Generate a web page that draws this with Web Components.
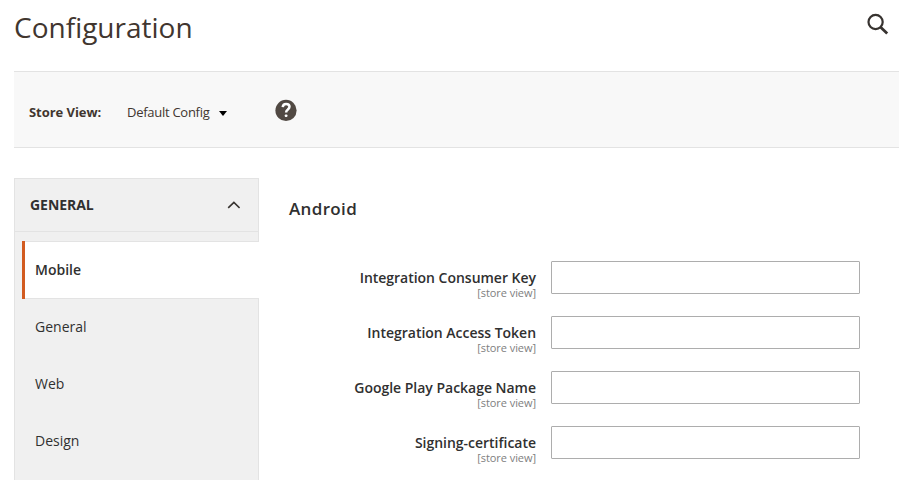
<!DOCTYPE html>
<html lang="en">
<head>
<meta charset="utf-8">
<title>Configuration</title>
<style>
html,body{margin:0;height:480px;overflow:hidden;background:#fff}
body{font-family:"Open Sans","Noto Sans",sans-serif;font-size:14px;color:#303030}
</style>
</head>
<body>
<config-page></config-page>
<script>
const define = (name, html) => customElements.define(name, class extends HTMLElement {
  constructor() {
    super();
    const t = document.createElement('template');
    t.innerHTML = html;
    this.attachShadow({mode: 'open'}).append(t.content.cloneNode(true));
  }
});

define('page-header', `
<style>
:host{display:flex;justify-content:space-between;height:71px;box-sizing:border-box;padding:8px 10px 0 14px}
h1{margin:0;font-size:28px;line-height:39px;font-weight:400;color:#41362f}
svg{display:block;margin-top:5px}
</style>
<h1><slot></slot></h1>
<svg width="23" height="23" viewBox="0 0 23 23" fill="none" stroke="#373330"><circle cx="9.6" cy="9" r="7.1" stroke-width="2.2"/><path d="M14.4 13.9L21.2 20.4" stroke-width="2.8"/></svg>`);

define('help-icon', `
<style>:host{display:block;width:22px;height:22px}svg{display:block}</style>
<svg width="22" height="22" viewBox="0 -.4 22 22"><circle cx="11" cy="11" r="10.6" fill="#514943"/><path d="M7.7 7.7C7.9 5.5 9.1 4.6 11.1 4.6C13.3 4.6 14.5 5.7 14.5 7.4C14.5 8.8 13.6 9.5 12.6 10.3C11.5 11.1 11.1 11.6 11.1 13.2" fill="none" stroke="#fff" stroke-width="2.5"/><rect x="9.8" y="15.1" width="2.6" height="2.6" rx=".8" fill="#fff"/></svg>`);

define('store-switcher', `
<style>
:host{display:flex;align-items:center;height:77px;box-sizing:border-box;margin-left:14px;padding:0 15px;background:#f8f8f8;border:solid #e3e3e3;border-width:1px 0;font-size:13px;color:#41362f}
b{width:98px;font-weight:700;padding-top:4px;letter-spacing:-.05px}
span{width:92px;letter-spacing:-.27px;padding-top:4px}
i{width:0;height:0;border:solid transparent;border-width:5px 4px 0;border-top-color:#000;margin:8px 48px 0 0}
</style>
<b>Store View:</b><span><slot></slot></span><i></i><help-icon></help-icon>`);

define('nav-item', `
<style>
:host{display:block;box-sizing:border-box;height:57px;line-height:55px;padding-left:13px;margin-left:7px}
:host([active]){height:58px;line-height:56px;margin-right:-1px;padding-left:10px;border:solid #e3e3e3;border-width:1px 0;border-left:3px solid #d25b20;background:#fff;font-weight:600;position:relative}
:host([active])::before{content:"";position:absolute;left:-3px;top:-1px;width:3px;height:58px;background:#d25b20}
</style><slot></slot>`);

define('side-nav', `
<style>
:host{display:block;box-sizing:border-box;width:245px;height:302px;background:#f0f0f0;border:1px solid #e3e3e3;border-bottom:0}
header{display:flex;align-items:center;justify-content:space-between;box-sizing:border-box;height:53px;padding:0 18px 0 15px;border-bottom:1px solid #e3e3e3;font-weight:700;letter-spacing:-.05px}
header slot{display:block;padding-bottom:2px}
nav{padding-top:9px}
</style>
<header><slot name="title"></slot><svg width="13" height="8" viewBox="0 0 13 8" fill="none" stroke="#373330" stroke-width="1.6"><path d="M1.2 6.9L6.9 1.4L12.6 6.9"/></svg></header>
<nav><slot></slot></nav>`);

define('config-field', `
<style>
:host{display:grid;grid-template-columns:247px 309px;column-gap:15px;height:55px}
:host(:last-of-type){height:42px}
div{display:flex;flex-direction:column;align-items:flex-end;padding-top:7px}
label{font-weight:600;line-height:19px;letter-spacing:-.02px}
small{font-size:11px;line-height:13px;margin-top:-1px;letter-spacing:-.06px;color:#808080}
input{box-sizing:border-box;width:309px;height:33px;margin:0;border:1px solid #adadad;border-radius:1px;background:#fff;outline:0}
</style>
<div><label for="value"><slot></slot></label><small>[store view]</small></div><input id="value" type="text">`);

define('config-page', `
<style>
:host{display:block}
main{display:flex;gap:30px;padding:30px 0 0 14px}
h2{margin:0 0 40px;padding-top:19px;font-size:17px;line-height:24px;font-weight:600;letter-spacing:.35px}
</style>
<page-header>Configuration</page-header>
<store-switcher>Default Config</store-switcher>
<main>
<side-nav><span slot="title">GENERAL</span><nav-item active>Mobile</nav-item><nav-item>General</nav-item><nav-item>Web</nav-item><nav-item>Design</nav-item></side-nav>
<section><h2>Android</h2>
<config-field>Integration Consumer Key</config-field><config-field>Integration Access Token</config-field><config-field>Google Play Package Name</config-field><config-field>Signing-certificate</config-field></section>
</main>`);
</script>
</body>
</html>
